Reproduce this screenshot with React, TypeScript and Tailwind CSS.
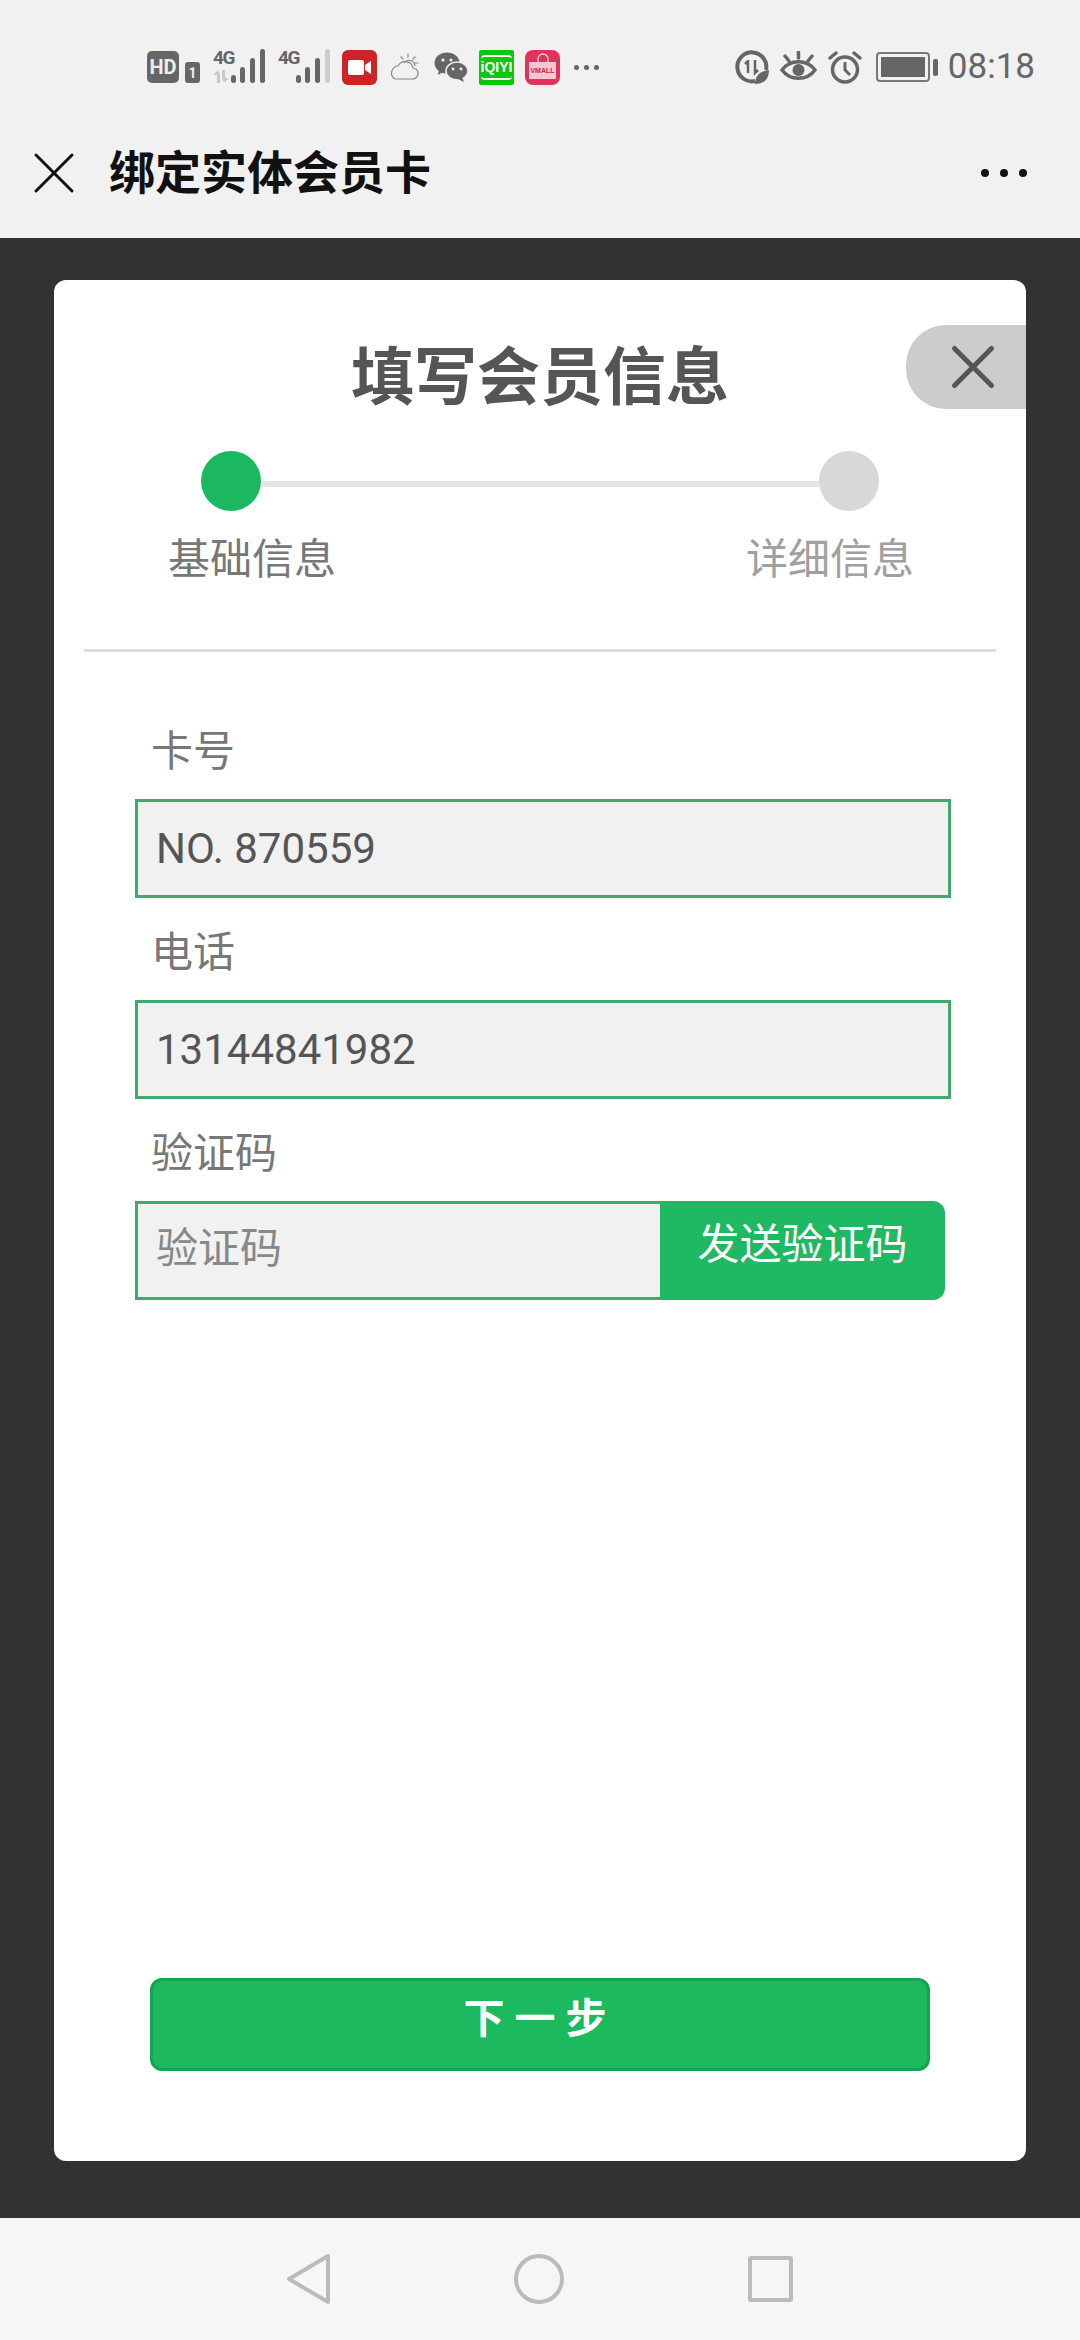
import React from 'react';
import { X } from 'lucide-react';

const cjk = { fontFamily: 'Roboto, "Noto Sans CJK SC", sans-serif' };

const Signal = ({ last = '#666' }: { last?: string }) => (
  <svg width="35" height="34" viewBox="0 0 35 34">
    <rect x="0" y="26" width="5" height="8" rx="2.5" fill="#666" />
    <rect x="9" y="18" width="5" height="16" rx="2.5" fill="#666" />
    <rect x="19" y="9" width="5" height="25" rx="2.5" fill="#666" />
    <rect x="29" y="0" width="5" height="34" rx="2.5" fill={last} />
  </svg>
);

const FourG = ({ arrows = false }: { arrows?: boolean }) => (
  <div className="flex flex-col w-[18px] h-[36px]">
    <span className="text-[19px] leading-[17px] font-bold text-[#666] tracking-[-1.5px] font-['Roboto']">4G</span>
    {arrows && (
      <svg className="mt-[4px]" width="18" height="13" viewBox="0 0 18 13" fill="#c8c8c8">
        <path d="M4 13V5H0l5-5 2 5v8zM9 0h3v8h4l-5 5-2-5z" />
      </svg>
    )}
  </div>
);

const StatusLeft = () => (
  <div className="flex items-center">
    <div className="w-[32px] h-[32px] rounded-[5px] bg-[#666] flex items-center justify-center text-[#eee] text-[20px] font-bold leading-none font-['Roboto']">
      HD
    </div>
    <div className="ml-[6px] mt-[11px] w-[15px] h-[21px] rounded-[3px] bg-[#666] flex items-center justify-center text-[#eee] text-[14px] font-bold leading-none font-['Roboto']">
      1
    </div>
    <div className="ml-[13px] flex items-start">
      <FourG arrows />
      <Signal />
    </div>
    <div className="ml-[12px] flex items-start">
      <FourG />
      <Signal last="#ccc" />
    </div>
    <div className="ml-[11px] w-[35px] h-[35px] rounded-[6px] bg-[#cc2427] flex items-center justify-center">
      <svg width="23" height="15" viewBox="0 0 23 15" fill="#fff">
        <rect width="16" height="15" rx="2" />
        <path d="M17 5l6-4v13l-6-4z" />
      </svg>
    </div>
    <svg className="ml-[12px]" width="30" height="28" viewBox="0 0 30 28" fill="none" stroke="#888" strokeWidth="1.2">
      <path d="M6 26h17a5.5 5.5 0 0 0 1-11 8 8 0 0 0-15-2 7 7 0 0 0-3 13z" />
      <path d="M15 10a6 6 0 0 1 11 3" />
      <path d="M19 1v3M26 4l-2 2M29 10h-3M12 4l2 2" strokeLinecap="round" />
    </svg>
    <svg className="ml-[15px]" width="34" height="30" viewBox="0 0 34 30" fill="#666">
      <ellipse cx="13" cy="11" rx="12.5" ry="10.5" />
      <path d="M5 17l-1 6 7-4z" />
      <ellipse cx="23" cy="19" rx="11" ry="9" stroke="#f1f1f1" strokeWidth="1.5" />
      <path d="M28 25l2 5-6-3z" />
      <circle cx="9" cy="8" r="1.6" fill="#f1f1f1" />
      <circle cx="17" cy="8" r="1.6" fill="#f1f1f1" />
      <circle cx="19" cy="17" r="1.4" fill="#f1f1f1" />
      <circle cx="27" cy="17" r="1.4" fill="#f1f1f1" />
    </svg>
    <div className="ml-[11px] w-[35px] h-[35px] rounded-[2px] bg-[#0cc80c] flex items-center justify-center">
      <div className="w-[31px] h-[25px] border-y-2 border-white rounded-[4px] flex items-center justify-center text-white text-[14px] font-bold leading-none font-['Liberation_Sans']">
        iQIYI
      </div>
    </div>
    <div className="ml-[11px] w-[35px] h-[35px] rounded-[8px] bg-[#e0325b] relative flex items-end justify-center pb-[6px]">
      <svg className="absolute top-[3px] left-[11px]" width="14" height="10" viewBox="0 0 14 10" fill="none" stroke="#f8d8e0" strokeWidth="1.3">
        <path d="M2 10V6a5 5 0 0 1 10 0v4" />
      </svg>
      <div className="w-[27px] h-[17px] bg-[#f6c6d2] text-[#d01c48] text-[7px] leading-[17px] text-center font-bold font-['Liberation_Sans']">
        VMALL
      </div>
    </div>
    <div className="ml-[14px] flex gap-[5px]">
      <div className="w-[5px] h-[5px] rounded-full bg-[#666]" />
      <div className="w-[5px] h-[5px] rounded-full bg-[#666]" />
      <div className="w-[5px] h-[5px] rounded-full bg-[#666]" />
    </div>
  </div>
);

const StatusRight = () => (
  <div className="flex items-center">
    <svg width="34" height="34" viewBox="0 0 34 34" fill="none" stroke="#666">
      <path d="M20 31a14.5 14.5 0 1 1 11-11" strokeWidth="4" />
      <path d="M13 11l-3 3M13 10v13M20 10v13l3-3" strokeWidth="2.5" />
      <path d="M20 34c0-8 5-13 14-14 0 9-5 14-14 14z" fill="#666" stroke="none" />
    </svg>
    <svg className="ml-[11px]" width="37" height="32" viewBox="0 0 37 32" fill="none" stroke="#666" strokeWidth="3.5">
      <path d="M2 19c8-11 25-11 33 0-8 11-25 11-33 0z" />
      <circle cx="18.5" cy="19" r="6" fill="#666" stroke="none" />
      <path d="M18.5 1v6M5 5l4 5M32 5l-4 5" strokeLinecap="round" />
    </svg>
    <svg className="ml-[11px]" width="34" height="33" viewBox="0 0 34 33" fill="none" stroke="#666" strokeWidth="3.5">
      <circle cx="17" cy="18.5" r="12.5" />
      <path d="M17 11v8l5 5" strokeWidth="3" />
      <path d="M2 7l6-5M32 7l-6-5" strokeLinecap="round" />
    </svg>
    <div className="ml-[14px] w-[54px] h-[30px] rounded-[4px] border-2 border-[#777] p-[3px]">
      <div className="w-full h-full bg-[#666]" />
    </div>
    <div className="ml-[3px] w-[5px] h-[17px] rounded-[2px] bg-[#666]" />
    <span className="ml-[10px] text-[35px] leading-[38px] text-[#666] font-['Roboto']">08:18</span>
  </div>
);

const Field = ({ label, value }: { label: string; value: string }) => (
  <>
    <div className="pl-[16px] text-[42px] leading-[50px] text-[#777]">{label}</div>
    <input
      readOnly
      value={value}
      className="mt-[22px] mb-[30px] block w-full h-[99px] border-[3px] border-[#3eaa6e] bg-[#f1f1f1] pl-[18px] text-[42px] text-[#555] outline-none"
      style={cjk}
    />
  </>
);

export default function App() {
  return (
    <div className="w-[1080px] h-[2340px] flex flex-col" style={cjk}>
      <div className="h-[238px] shrink-0 bg-[#f1f1f1]">
        <div className="pt-[48px] pl-[147px] pr-[45px] flex justify-between items-center h-[38px] box-content">
          <StatusLeft />
          <StatusRight />
        </div>
        <div className="mt-[57px] h-[60px] flex items-center pl-[18px] pr-[53px]">
          <X size={72} strokeWidth={3} absoluteStrokeWidth className="text-[#111]" />
          <span className="ml-[19px] text-[46px] font-bold text-[#111] leading-none">绑定实体会员卡</span>
          <div className="ml-auto flex gap-[11px]">
            <div className="w-[8px] h-[8px] rounded-full bg-[#111]" />
            <div className="w-[8px] h-[8px] rounded-full bg-[#111]" />
            <div className="w-[8px] h-[8px] rounded-full bg-[#111]" />
          </div>
        </div>
      </div>

      <div className="flex-1 bg-[#323232] pt-[42px] pb-[57px] px-[54px] flex">
        <div className="relative flex-1 bg-white rounded-[12px] flex flex-col">
          <div className="absolute right-0 top-[45px] w-[120px] h-[84px] bg-[#ccc] rounded-l-[40px] flex items-center justify-center pl-[14px]">
            <X size={74} strokeWidth={5} absoluteStrokeWidth className="text-[#555]" />
          </div>

          <div className="pt-[66px] text-center text-[63px] leading-[63px] font-bold text-[#555]">填写会员信息</div>

          <div className="mt-[42px] px-[147px] flex items-center">
            <div className="w-[60px] h-[60px] rounded-full bg-[#1cb85f]" />
            <div className="flex-1 h-[6px] mt-[6px] bg-[#e5e5e5]" />
            <div className="w-[60px] h-[60px] rounded-full bg-[#d8d8d8]" />
          </div>
          <div className="mt-[24px] pl-[114px] pr-[112px] flex justify-between text-[42px] leading-[50px]">
            <span className="text-[#777]">基础信息</span>
            <span className="text-[#a0a0a0]">详细信息</span>
          </div>

          <div className="mt-[64px] mx-[30px] h-[3px] bg-[#ddd]" />

          <div className="mt-[75px] pl-[81px] pr-[75px]">
            <Field label="卡号" value="NO. 870559" />
            <Field label="电话" value="13144841982" />
            <div className="pl-[16px] text-[42px] leading-[50px] text-[#777]">验证码</div>
            <div className="mt-[22px] h-[99px] flex pr-[6px]">
              <input
                readOnly
                placeholder="验证码"
                className="w-[525px] h-full border-[3px] border-r-0 border-[#3eaa6e] bg-[#f1f1f1] pl-[18px] pb-1 text-[42px] text-[#555] placeholder:text-[#888] outline-none"
                style={cjk}
              />
              <button className="flex-1 h-full bg-[#1fb964] rounded-r-[12px] text-white text-[42px] leading-none pb-[12px]">
                发送验证码
              </button>
            </div>
          </div>

          <button className="mt-auto mb-[90px] mx-[96px] h-[93px] rounded-[12px] border-[3px] border-[#10a550] bg-[#1cb95f] text-white text-[41px] font-bold tracking-[10px] leading-none pb-[10px]">
            下一步
          </button>
        </div>
      </div>

      <div className="h-[122px] shrink-0 bg-[#f6f6f6] flex items-center justify-center gap-[184px]">
        <svg width="43" height="50" viewBox="0 0 43 50" fill="none" stroke="#bbb" strokeWidth="4" strokeLinejoin="round">
          <path d="M41 2v46L2 25z" />
        </svg>
        <svg width="50" height="50" viewBox="0 0 50 50" fill="none" stroke="#bbb" strokeWidth="4">
          <circle cx="25" cy="25" r="23" />
        </svg>
        <svg width="45" height="46" viewBox="0 0 45 46" fill="none" stroke="#bbb" strokeWidth="4" strokeLinejoin="round">
          <rect x="2" y="2" width="41" height="42" rx="1" />
        </svg>
      </div>
    </div>
  );
}
